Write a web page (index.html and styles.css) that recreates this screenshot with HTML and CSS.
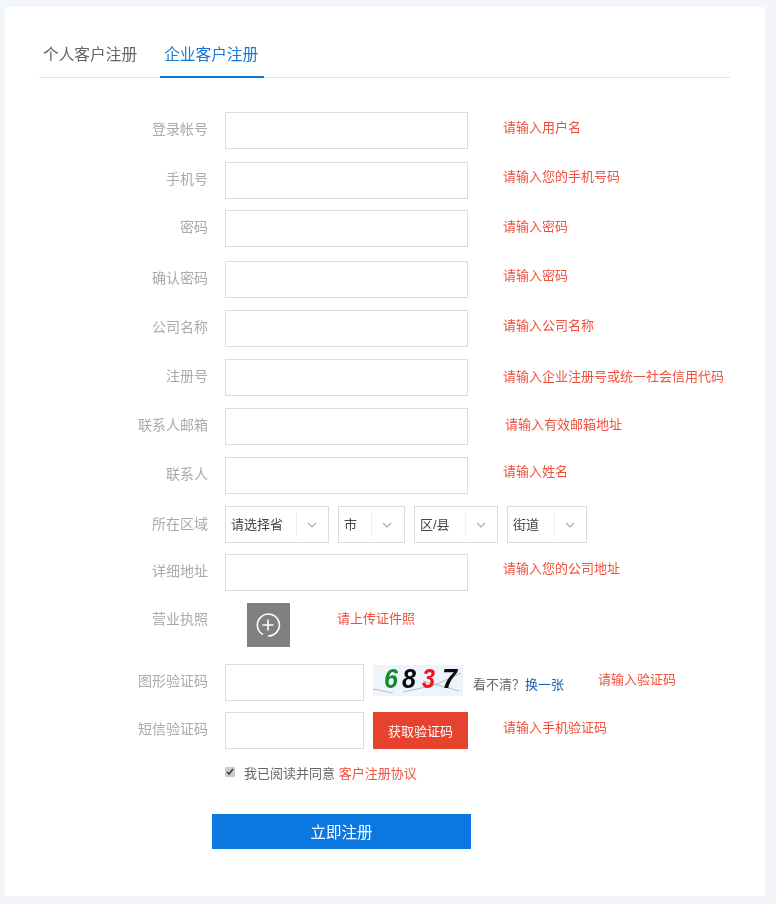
FILE: index.html
```html
<!DOCTYPE html>
<html lang="zh-CN">
<head>
<meta charset="utf-8">
<title>企业客户注册</title>
<link rel="stylesheet" href="styles.css">
</head>
<body>
<main class="card">
  <nav class="tabs">
    <a class="tab">个人客户注册</a>
    <a class="tab active">企业客户注册</a>
  </nav>
  <form class="form">
    <div class="row"><label class="label">登录帐号</label><input class="field"><span class="err up4">请输入用户名</span></div>
    <div class="row t1"><label class="label">手机号</label><input class="field"><span class="err up5">请输入您的手机号码</span></div>
    <div class="row tm1"><label class="label">密码</label><input class="field"><span class="err up2">请输入密码</span></div>
    <div class="row t2"><label class="label">确认密码</label><input class="field"><span class="err up5">请输入密码</span></div>
    <div class="row"><label class="label">公司名称</label><input class="field"><span class="err up4">请输入公司名称</span></div>
    <div class="row"><label class="label">注册号</label><input class="field"><span class="err up0">请输入企业注册号或统一社会信用代码</span></div>
    <div class="row"><label class="label">联系人邮箱</label><input class="field"><span class="err shift2 up2">请输入有效邮箱地址</span></div>
    <div class="row"><label class="label">联系人</label><input class="field"><span class="err up6">请输入姓名</span></div>
    <div class="row"><label class="label region-label">所在区域</label>
      <div class="selects">
        <div class="select w104"><span class="sel-text">请选择省</span><span class="sel-arrow"><svg width="10" height="6" viewBox="0 0 10 6"><path d="M1 1l4 4 4-4" fill="none" stroke="#aaa" stroke-width="1.2"/></svg></span></div>
        <div class="select w67"><span class="sel-text">市</span><span class="sel-arrow wide"><svg width="10" height="6" viewBox="0 0 10 6"><path d="M1 1l4 4 4-4" fill="none" stroke="#aaa" stroke-width="1.2"/></svg></span></div>
        <div class="select w84"><span class="sel-text">区/县</span><span class="sel-arrow"><svg width="10" height="6" viewBox="0 0 10 6"><path d="M1 1l4 4 4-4" fill="none" stroke="#aaa" stroke-width="1.2"/></svg></span></div>
        <div class="select w80"><span class="sel-text">街道</span><span class="sel-arrow"><svg width="10" height="6" viewBox="0 0 10 6"><path d="M1 1l4 4 4-4" fill="none" stroke="#aaa" stroke-width="1.2"/></svg></span></div>
      </div>
    </div>
    <div class="row tm1"><label class="label">详细地址</label><input class="field"><span class="err up6">请输入您的公司地址</span></div>
    <div class="row upload-row"><label class="label up-label">营业执照</label>
      <div class="upload"><svg class="plus" width="26" height="26" viewBox="0 0 26 26" fill="none" stroke="#fff" stroke-width="1.6"><path d="M8 22.6A11 11 0 1 1 13 24"/><path d="M13 7.5v11M7.5 13h11"/></svg></div>
      <span class="err err-up">请上传证件照</span>
    </div>
    <div class="row captcha-row"><label class="label">图形验证码</label><input class="field short">
      <svg class="captcha" width="90" height="31" viewBox="0 0 90 31">
        <rect width="90" height="31" fill="#eef4fb"/>
        <path d="M30 27L62 20L88 8M50 16L86 26M0 24L20 28" stroke="#b9bcc2" stroke-width="1" fill="none"/>
        <g class="captcha-digits">
          <text x="11" y="23" textLength="14" lengthAdjust="spacingAndGlyphs" fill="#138a2c">6</text>
          <text x="29" y="23" textLength="14" lengthAdjust="spacingAndGlyphs" fill="#0b0b0b">8</text>
          <text x="49" y="23" textLength="13" lengthAdjust="spacingAndGlyphs" fill="#f5141c">3</text>
          <text x="69" y="23" textLength="15" lengthAdjust="spacingAndGlyphs" fill="#0b0b0b">7</text>
        </g>
      </svg>
      <span class="unclear">看不清？<a class="swap">换一张</a></span>
      <span class="err err-cap">请输入验证码</span>
    </div>
    <div class="row tm1"><label class="label">短信验证码</label><input class="field short"><button type="button" class="sms">获取验证码</button><span class="err err-sms">请输入手机验证码</span></div>
    <div class="agree"><input type="checkbox" class="check" checked><span>我已阅读并同意 <a class="protocol">客户注册协议</a></span></div>
    <button type="button" class="submit">立即注册</button>
  </form>
</main>
</body>
</html>
```
FILE: styles.css
```css
* { box-sizing: border-box; }
html, body { margin: 0; height: 904px; overflow: hidden; }
body {
  background: #f2f5fa;
  padding: 7px 11px 8px 5px;
  font-family: "Liberation Sans", "Noto Sans CJK SC", sans-serif;
  font-size: 13px;
}
.card {
  height: 889px;
  background: #fff;
  padding: 0 35px 0 34px;
  filter: blur(.5px);
}
.tabs {
  display: flex;
  height: 71px;
  padding-top: 36px;
  border-bottom: 1px solid #dfe3e8;
}
.tab {
  height: 35px;
  line-height: 24px;
  padding: 0 4px;
  font-size: 15.7px;
  color: #666;
}
.tab.active {
  margin-left: 19px;
  padding: 0 6px 0 4px;
  color: #1677d8;
  border-bottom: 2px solid #0a78e0;
}
.form { margin: 34px 0 0 -34px; display: flex; flex-direction: column; }
.row {
  display: flex;
  align-items: center;
  height: 37px;
  margin-bottom: 12px;
}
.t1 { margin-top: 1px; }
.t2 { margin-top: 2px; }
.tm1 { margin-top: -1px; }
.label {
  flex: none;
  width: 203px;
  margin-right: 17px;
  margin-bottom: 6px;
  text-align: right;
  font-size: 14px;
  color: #aaa;
}
.label.region-label { margin-bottom: 4px; }
.field {
  flex: none;
  width: 243px;
  height: 100%;
  border: 1px solid #dcdcdc;
  background: #fff;
  outline: 0;
}
.field.short { width: 139px; }
.err {
  margin-left: 35px;
  color: #f0503c;
  font-size: 13px;
  white-space: nowrap;
}
.shift2 { margin-left: 37px; }
.up0 { margin-bottom: 4px; }
.up2 { margin-bottom: 6px; }
.up4 { margin-bottom: 9px; }
.up5 { margin-bottom: 10px; }
.up6 { margin-bottom: 11px; }
.selects { display: flex; gap: 9px; height: 100%; }
.select {
  display: flex;
  align-items: center;
  height: 100%;
  border: 1px solid #dcdcdc;
  color: #444;
}
.w104 { width: 104px; }
.w67 { width: 67px; }
.w84 { width: 84px; }
.w80 { width: 80px; }
.sel-text { flex: 1; padding-left: 5px; margin-bottom: 2px; white-space: nowrap; }
.sel-arrow {
  flex: none;
  display: flex;
  align-items: center;
  width: 32px;
  height: 25px;
  padding-left: 10px;
  border-left: 1px solid #eee;
}
.sel-arrow.wide { width: 33px; }
.upload-row { height: 44px; margin-bottom: 17px; }
.label.up-label { margin-bottom: 14px; }
.upload {
  flex: none;
  display: flex;
  align-items: center;
  justify-content: center;
  width: 43px;
  height: 44px;
  margin-left: 22px;
  background: #808080;
}
.plus { margin-right: 2px; }
.err-up { margin-left: 47px; margin-bottom: 16px; }
.captcha { flex: none; margin-left: 9px; margin-bottom: 4px; overflow: visible; }
.captcha-digits { font: italic bold 28px "Liberation Sans", sans-serif; }
.unclear { margin-left: 10px; margin-top: 2px; color: #666; white-space: nowrap; }
.swap { color: #1a62b8; }
.err-cap { margin-left: 34px; margin-bottom: 8px; }
.sms {
  flex: none;
  width: 95px;
  height: 100%;
  margin-left: 9px;
  border: 0;
  background: #e5432d;
  color: #fff;
  font: 13px "Liberation Sans", "Noto Sans CJK SC", sans-serif;
  padding: 0;
}
.err-sms { margin-bottom: 9px; }
.agree {
  display: flex;
  align-items: center;
  height: 20px;
  margin: 1px 0 32px 220px;
  color: #666;
}
.check { width: 10px; height: 10px; margin: 0 9px 0 0; accent-color: #ccc; }
.protocol { color: #ee5340; }
.submit {
  align-self: flex-start;
  width: 259px;
  height: 35px;
  margin-left: 207px;
  border: 0;
  background: #0a78e0;
  color: #fff;
  font: 15.5px "Liberation Sans", "Noto Sans CJK SC", sans-serif;
  padding: 0 0 2px;
}
```
